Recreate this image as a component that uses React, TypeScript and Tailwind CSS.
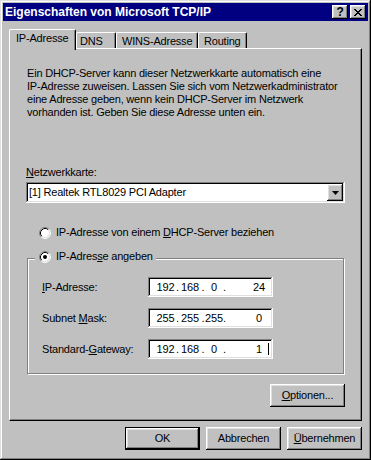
const raised =
  "shadow-[inset_-1px_-1px_#000,inset_1px_1px_#fff,inset_-2px_-2px_#808080,inset_2px_2px_#dfdfdf]";
const sunken =
  "shadow-[inset_-1px_-1px_#fff,inset_1px_1px_#808080,inset_-2px_-2px_#dfdfdf,inset_2px_2px_#000]";

const Radio = ({ checked = false }: { checked?: boolean }) => (
  <svg width="12" height="12" viewBox="0 0 12 12" className="shrink-0">
    <circle cx="6" cy="6" r="5" fill="#fff" />
    <path d="M2.11 9.89A5.5 5.5 0 0 1 9.89 2.11" stroke="#808080" fill="none" />
    <path d="M9.89 2.11A5.5 5.5 0 0 1 2.11 9.89" stroke="#fff" fill="none" />
    <path d="M2.82 9.18A4.5 4.5 0 0 1 9.18 2.82" stroke="#000" fill="none" />
    <path d="M9.18 2.82A4.5 4.5 0 0 1 2.82 9.18" stroke="#dfdfdf" fill="none" />
    {checked && <circle cx="6" cy="6" r="2" fill="#000" />}
  </svg>
);

// pixel X like the marlett close glyph
const closeRows = ["11000011", "01100110", "00111100", "00011000", "00111100", "01100110", "11000011"];

const CloseGlyph = () => (
  <svg width="8" height="7" viewBox="0 0 8 7" shapeRendering="crispEdges">
    {closeRows.map((row, y) =>
      row.split("").map((c, x) => (c === "1" ? <rect key={`${x}-${y}`} x={x} y={y} width="1" height="1" fill="#000" /> : null))
    )}
  </svg>
);

const IpField = ({ parts, caret = false }: { parts: string[]; caret?: boolean }) => (
  <div className={`relative flex h-[20px] w-[125px] items-center bg-white pl-[7px] ${sunken}`}>
    <span className="w-[21px] text-center">{parts[0]}</span>
    <span className="w-[3px]">.</span>
    <span className="w-[22px] text-center">{parts[1]}</span>
    <span className="w-[4px] text-center">.</span>
    <span className="w-[18px] text-center">{parts[2]}</span>
    <span className="w-[3px]">.</span>
    <span className="flex-1 pl-[19px] text-center">{parts[3]}</span>
    {caret && <span className="absolute top-[4px] left-[120px] h-[12px] w-px bg-black" />}
  </div>
);

const fields = [
  { label: <><u>I</u>P-Adresse:</>, parts: ["192", "168", "0", "24"] },
  { label: <>Subnet <u>M</u>ask:</>, parts: ["255", "255", "255", "0"] },
  { label: <>Standard-<u>G</u>ateway:</>, parts: ["192", "168", "0", "1"], caret: true },
];

const tabs = [
  { name: "DNS", className: "w-[40px] pl-[3px]" },
  { name: "WINS-Adresse", className: "w-[82px] pl-[5px]" },
  { name: "Routing", className: "w-[49px] pl-[5px]" },
];

export default function App() {
  return (
    <div
      className={`flex h-[460px] w-[371px] flex-col bg-[#c0c0c0] p-[3px] font-['Liberation_Sans',Arial,sans-serif] text-[11px] leading-[13px] tracking-[-0.2px] text-black shadow-[inset_-1px_-1px_#000,inset_1px_1px_#dfdfdf,inset_-2px_-2px_#808080,inset_2px_2px_#fff]`}
    >
      {/* title bar */}
      <div className="flex h-[18px] items-center bg-[#000080] px-[2px]">
        <span className="flex-1 text-[12px] font-bold tracking-normal text-white">
          Eigenschaften von Microsoft TCP/IP
        </span>
        <div className="flex gap-[2px]">
          <div className={`flex h-[14px] w-[16px] items-center justify-center bg-[#c0c0c0] text-[12px] font-bold ${raised}`}>
            ?
          </div>
          <div className={`flex h-[14px] w-[16px] items-center justify-center bg-[#c0c0c0] ${raised}`}>
            <CloseGlyph />
          </div>
        </div>
      </div>

      {/* tabs */}
      <div className="mt-[8px] ml-[6px] flex items-end">
        <div className="relative z-10 -mb-[2px] h-[21px] w-[67px] rounded-t-[2px] border-t border-r border-l border-t-white border-r-black border-l-white bg-[#c0c0c0] pt-[2px] pl-[6px] whitespace-nowrap shadow-[inset_-1px_0_#808080]">
          IP-Adresse
        </div>
        {tabs.map((tab) => (
          <div
            key={tab.name}
            className={`h-[16px] rounded-t-[2px] border-t border-r border-l border-t-white border-r-black border-l-white pt-[2px] whitespace-nowrap shadow-[inset_-1px_0_#808080] ${tab.className}`}
          >
            {tab.name}
          </div>
        ))}
      </div>

      {/* panel */}
      <div className="ml-[6px] w-[353px] border border-t-white border-r-black border-b-black border-l-white px-[16px] pt-[18px] pb-[13px] shadow-[inset_-1px_-1px_#808080]">
        <p className="pl-[1px] whitespace-nowrap">
          Ein DHCP-Server kann dieser Netzwerkkarte automatisch eine
          <br />
          IP-Adresse zuweisen. Lassen Sie sich vom Netzwerkadministrator
          <br />
          eine Adresse geben, wenn kein DHCP-Server im Netzwerk
          <br />
          vorhanden ist. Geben Sie diese Adresse unten ein.
        </p>

        <div className="mt-[47px]">
          <u>N</u>etzwerkkarte:
        </div>
        <div className={`mt-[3px] flex h-[21px] items-center bg-white pr-[2px] pl-[3px] ${sunken}`}>
          <span className="flex-1">[1] Realtek RTL8029 PCI Adapter</span>
          <div className={`flex h-[17px] w-[16px] items-center justify-center bg-[#c0c0c0] ${raised}`}>
            <svg width="7" height="4" viewBox="0 0 7 4">
              <polygon points="0,0 7,0 3.5,4" fill="#000" />
            </svg>
          </div>
        </div>

        <div className="mt-[23px] flex h-[13px] items-center pl-[13px]">
          <Radio />
          <span className="ml-[5px]">
            IP-Adresse von einem <u>D</u>HCP-Server beziehen
          </span>
        </div>

        <div className="relative mx-[1px] mt-[19px] border border-[#808080] pt-[18px] pb-[14px] pl-[14px] shadow-[inset_1px_1px_#fff,1px_1px_#fff]">
          <div className="absolute top-[-9px] left-[7px] flex h-[13px] items-center bg-[#c0c0c0] pr-[3px] pl-[4px]">
            <Radio checked />
            <span className="ml-[5px]">
              IP-Adres<u>s</u>e angeben
            </span>
          </div>
          <div className="flex flex-col gap-[11px]">
            {fields.map((f, i) => (
              <div key={i} className="flex h-[20px] items-center">
                <span className="w-[106px]">{f.label}</span>
                <IpField parts={f.parts} caret={f.caret} />
              </div>
            ))}
          </div>
        </div>

        <div className="mt-[10px] flex justify-end">
          <button className={`flex h-[23px] w-[75px] items-center justify-center bg-[#c0c0c0] ${raised}`}>
            <span>
              <u>O</u>ptionen...
            </span>
          </button>
        </div>
      </div>

      {/* dialog buttons */}
      <div className="mt-[6px] flex justify-end gap-[6px] pr-[6px]">
        <button className="flex h-[23px] w-[75px] items-center justify-center bg-[#c0c0c0] shadow-[inset_-2px_-2px_#000,inset_1px_1px_#000,inset_2px_2px_#fff,inset_-3px_-3px_#808080,inset_3px_3px_#dfdfdf]">
          OK
        </button>
        <button className={`flex h-[23px] w-[75px] items-center justify-center bg-[#c0c0c0] ${raised}`}>
          Abbrechen
        </button>
        <button className={`flex h-[23px] w-[75px] items-center justify-center bg-[#c0c0c0] ${raised}`}>
          <span>
            <u>Ü</u>bernehmen
          </span>
        </button>
      </div>
    </div>
  );
}
